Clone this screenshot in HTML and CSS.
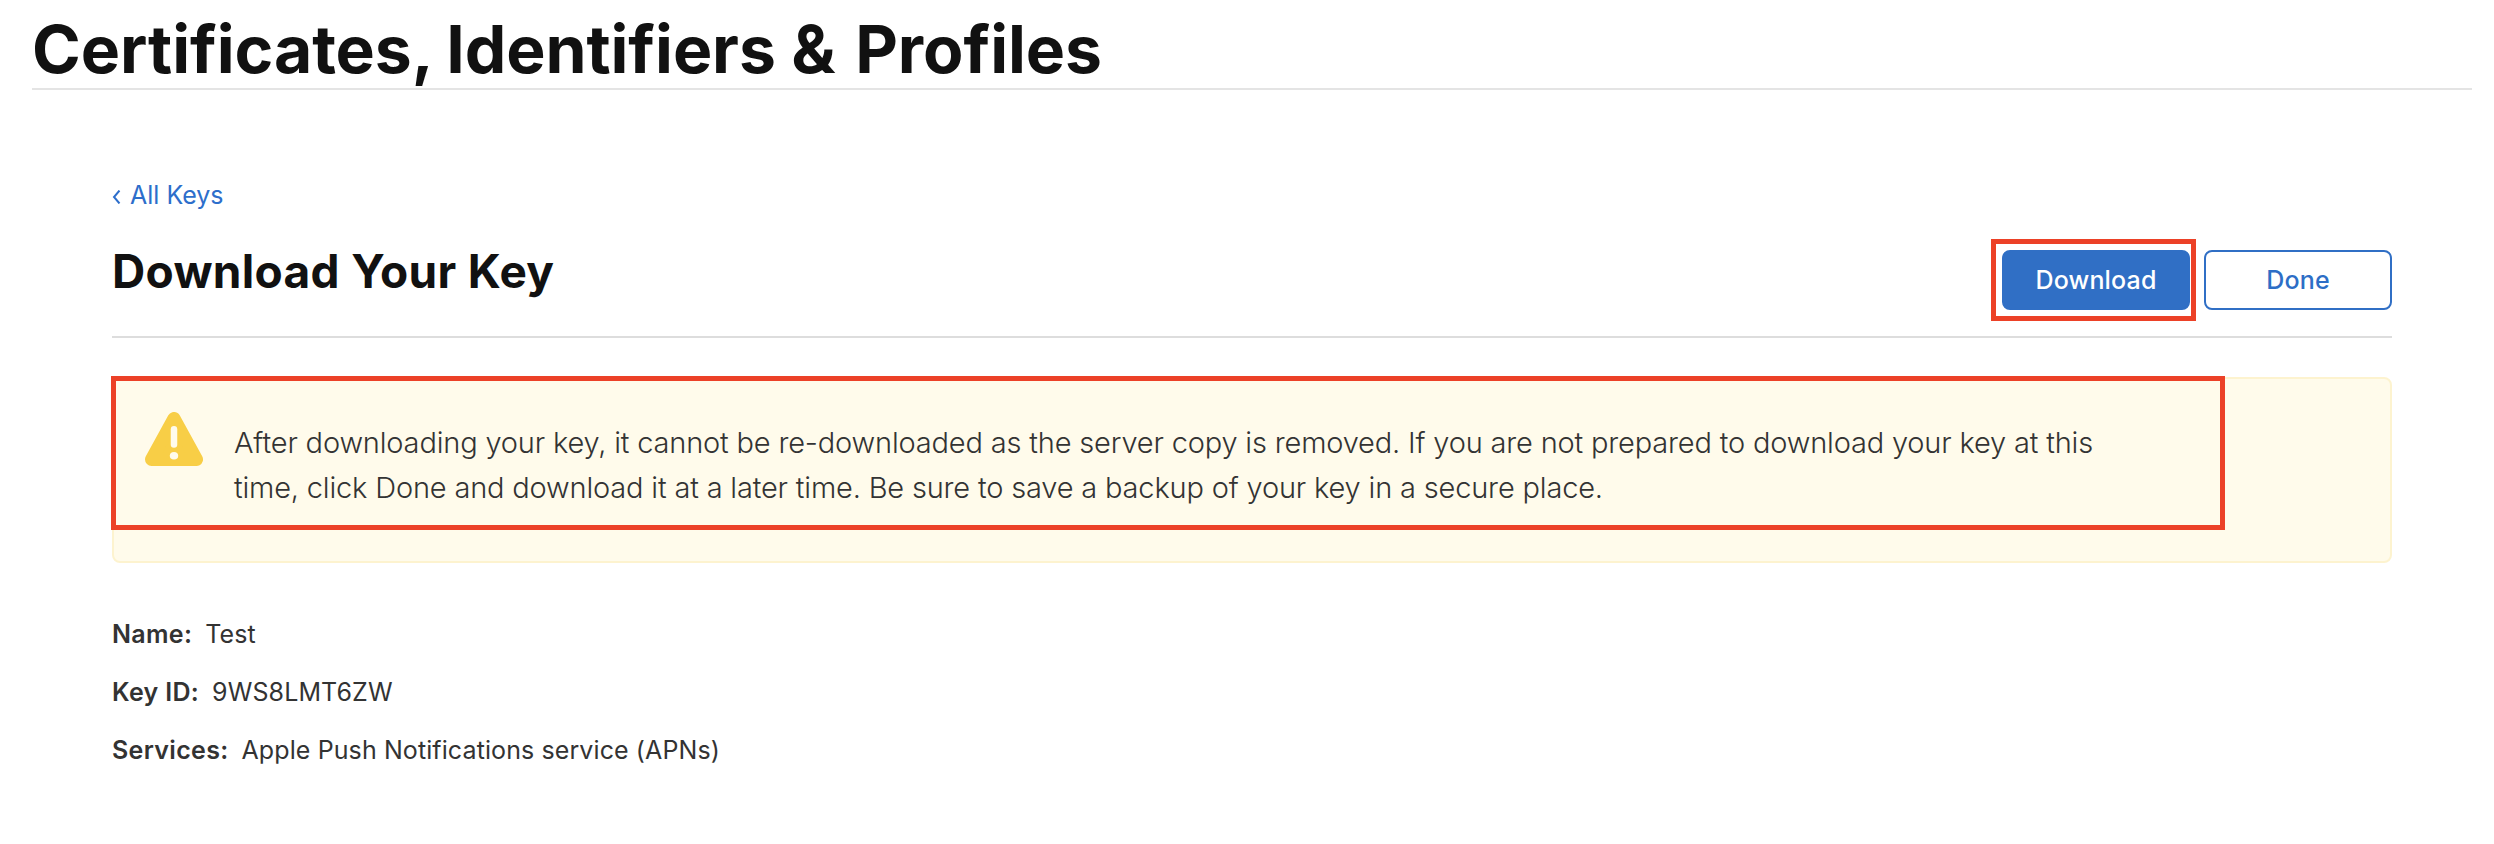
FILE: index.html
```html
<!DOCTYPE html>
<html lang="en"><head><meta charset="utf-8"><title>Certificates, Identifiers &amp; Profiles</title><link rel="stylesheet" href="styles.css"></head>
<body>
<header class="site-header"><h1 class="site-title"><span class="lead">Certificates,</span> Identifiers <span class="amp">&amp;</span> Profiles</h1></header>
<main class="content">
<a class="back"><svg class="chevron" viewBox="0 0 9 14"><path d="M7.500 0.500 2 7l5.500 6.500"/></svg><span>All Keys</span></a>
<div class="heading"><h2 class="title">Download Your Key</h2>
<div class="actions"><div class="highlight"><button class="btn primary">Download</button></div><button class="btn">Done</button></div></div>
<section class="notice"><div class="callout">
<svg class="warning" viewBox="0 0 58 54"><path d="M29 6.500 51.500 47.500H6.500Z" fill="#f8ce46" stroke="#f8ce46" stroke-width="13" stroke-linejoin="round"/><path d="M29 17.200V32.500" stroke="#fffbeb" stroke-width="6.500" stroke-linecap="round"/><ellipse cx="29" cy="43.700" rx="4.200" ry="3.800" fill="#fffbeb"/></svg>
<p class="message"><span class="line">After downloading your key, it cannot be re-downloaded as the server copy is removed. If you are not prepared to download your key at this</span> <span class="line">time, click Done and download it at a later time. Be sure to save a backup of your key in a secure place.</span></p>
</div></section>
<dl class="details"><div class="row"><dt>Name:</dt><dd>Test</dd></div><div class="row"><dt>Key ID:</dt><dd>9WS8LMT6ZW</dd></div><div class="row"><dt>Services:</dt><dd>Apple Push Notifications service (APNs)</dd></div></dl>
</main></body></html>
```
FILE: styles.css
```css
* { box-sizing: border-box; }
body { margin: 0; height: 844px; background: #fff; color: #111; font-family: Inter, "Liberation Sans", sans-serif; overflow: hidden; }
.site-header { margin: 0 22px 0 32px; height: 90px; border-bottom: 2px solid #e4e4e4; }
.site-title { margin: 0; font-size: 66px; line-height: 98px; font-weight: 700; letter-spacing: -0.08px; white-space: nowrap; }
.lead { margin-right: -3px; }
.amp { margin-right: 4px; }
.content { padding: 88px 102px 0 112px; }
.back { display: flex; align-items: center; gap: 9px; height: 34px; font-size: 25px; color: #2d6ecb; }
.chevron { width: 9px; height: 14px; margin-top: 4px; fill: none; stroke: #2d6ecb; stroke-width: 2; }
.heading { display: flex; justify-content: space-between; height: 126px; border-bottom: 2px solid #ddd; padding-top: 27px; }
.title { margin: 0; font-size: 46px; line-height: 64px; font-weight: 700; letter-spacing: 0.32px; }
.actions { display: flex; align-items: flex-start; gap: 8px; }
.highlight { display: flex; border: 5px solid #ec4127; padding: 6px 1px 6px 6px; }
.btn { width: 188px; height: 60px; padding: 0 0 1px; border: 2px solid #306fc5; border-radius: 8px; background: #fff; color: #2d6ec6; font: 500 25px Inter, sans-serif; letter-spacing: 0.15px; }
.actions > .btn { margin-top: 11px; }
.primary { background: #306fc5; color: #fff; }
.notice { margin-top: 39px; height: 186px; background: #fffbeb; border: 2px solid #fdf3cf; border-radius: 8px; }
.callout { display: flex; width: 2114px; height: 154px; margin: -3px; border: 5px solid #ec4127; padding: 30px 29px; }
.warning { width: 58px; height: 54px; margin-top: 1px; }
.message { margin: 9px 0 0 31px; font-size: 29px; line-height: 45px; font-weight: 300; letter-spacing: -0.175px; color: #333; white-space: nowrap; }
.line { display: block; }
.details { margin: 42px 0 0; font-size: 25px; color: #333; }
.row { display: flex; gap: 13px; height: 58px; line-height: 58px; }
dt { font-weight: 600; letter-spacing: 0.32px; }
dd { margin: 0; letter-spacing: 0.1px; }
```
